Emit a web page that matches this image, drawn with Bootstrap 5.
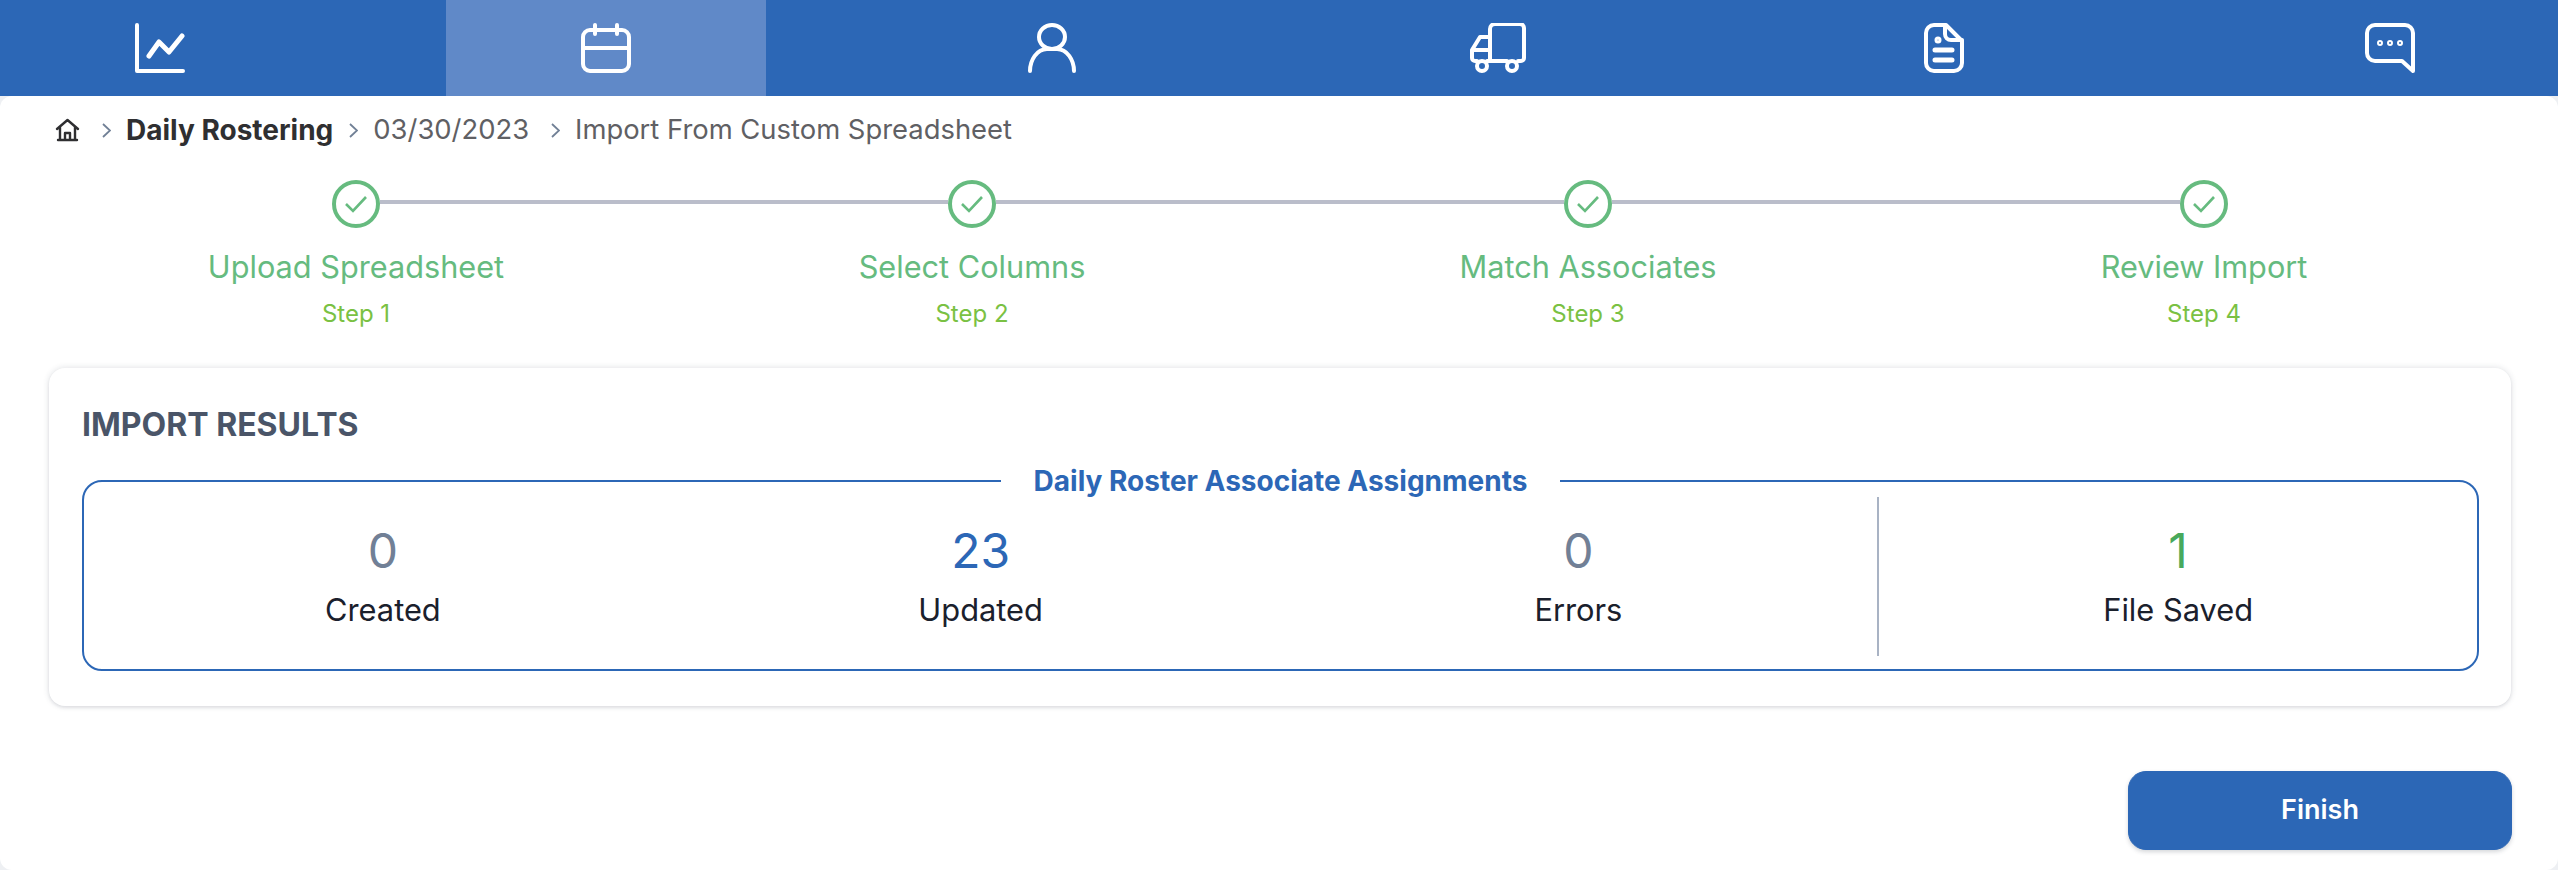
<!DOCTYPE html>
<html lang="en">

<head>
    <meta charset="UTF-8">
    <meta name="viewport" content="width=device-width, initial-scale=1.0">
    <title>Import From Custom Spreadsheet</title>
    <link href="https://cdn.jsdelivr.net/npm/bootstrap@5.3.0/dist/css/bootstrap.min.css" rel="stylesheet">
    <style>
        body {
            font-family: Inter, "Liberation Sans", sans-serif;
            background-color: #eef0f3;
            overflow: hidden;
        }

        /* top icon bar */
        .icon-bar {
            height: 96px;
            padding-right: 8px;
            background-color: #2c67b6;
        }

        .icon-tab {
            width: 320px;
            color: #fff;
        }

        .icon-tab.active {
            background-color: #6089c8;
        }

        .icon-tab svg {
            fill: none;
            stroke: currentColor;
            stroke-width: 4;
            stroke-linecap: round;
            stroke-linejoin: round;
        }

        .page-body {
            height: 774px;
            background-color: #fff;
            border-radius: 12px;
        }

        /* breadcrumb */
        .crumbs {
            height: 68px;
            padding: 0 0 0 55px;
            font-size: 27.4px;
            color: #5f6064;
        }

        .crumbs strong {
            margin-right: -6px;
            font-size: 28px;
            font-weight: 700;
            color: #2f2f31;
        }

        .crumb-gap {
            margin: 0 15px 0 22px;
            color: #718096;
        }

        /* stepper */
        .stepper {
            padding: 16px 46px 0 48px;
        }

        .step-item {
            position: relative;
            flex: 1 1 0;
            text-align: center;
        }

        .step-item:not(:last-child)::after {
            content: "";
            position: absolute;
            top: 20px;
            left: calc(50% + 24px);
            width: calc(100% - 48px);
            height: 4px;
            background-color: #babdca;
        }

        .step-dot {
            width: 48px;
            height: 48px;
            border: 4px solid #66bb7f;
            border-radius: 50%;
            color: #66bb7f;
        }

        .step-name {
            margin-top: 18px;
            font-size: 30.7px;
            line-height: 42px;
            color: #66bb7f;
        }

        .step-num {
            margin-top: 9px;
            font-size: 24px;
            line-height: 34px;
            color: #7ac143;
        }

        /* results card */
        .results-card {
            margin: 37px 47px 0 49px;
            height: 338px;
            padding: 37px 32px 0 33px;
            border: 0;
            border-radius: 16px;
            box-shadow: 0 0 6px rgba(45, 55, 72, 0.16), 0 2px 3px rgba(45, 55, 72, 0.08);
        }

        .results-title {
            margin: 0;
            font-size: 32px;
            line-height: 40px;
            font-weight: 700;
            color: #4a5568;
        }

        .results-box {
            margin-top: 19px;
            height: 207px;
            border: 2px solid #2c67b6;
            border-radius: 20px;
        }

        .results-box legend {
            float: none;
            width: auto;
            margin: 0 auto;
            padding: 0 33px;
            font-size: 28px;
            line-height: 34px;
            font-weight: 700;
            color: #2c67b6;
        }

        .stat-row {
            height: 159px;
            margin-top: -1px;
        }

        .stat-col {
            flex: 1 1 0;
            padding-top: 22px;
            text-align: center;
        }

        .stat-col.split {
            border-left: 2px solid #a9b3c4;
        }

        .stat-num {
            font-size: 48px;
            line-height: 64px;
        }

        .stat-label {
            margin-top: 7px;
            font-size: 30.8px;
            line-height: 40px;
            color: #1a202c;
        }

        .tone-grey { color: #718096; }
        .tone-blue { color: #2c67b6; }
        .tone-green { color: #48a95c; }

        /* finish button */
        .finish-row {
            margin-top: 65px;
            padding-right: 46px;
        }

        .finish-btn {
            width: 384px;
            height: 79px;
            border-radius: 18px;
            font-size: 27px;
            font-weight: 600;
            --bs-btn-bg: #2c67b6;
            --bs-btn-border-color: #2c67b6;
            --bs-btn-hover-bg: #275ca3;
            --bs-btn-hover-border-color: #275ca3;
            box-shadow: 0 2px 4px rgba(45, 55, 72, 0.2);
        }
    </style>
</head>

<body>
    <!-- Top icon bar -->
    <nav class="icon-bar d-flex justify-content-between">
        <a class="icon-tab d-flex align-items-center justify-content-center" href="#">
            <svg width="50" height="50" viewBox="0 0 50 50"><path d="M2 2V48H48"/><path d="M14 33L24 19L34 29L47 13" stroke-width="5"/></svg>
        </a>
        <a class="icon-tab active d-flex align-items-center justify-content-center" href="#">
            <svg width="50" height="50" viewBox="0 0 50 50"><rect x="2" y="7" width="46" height="41" rx="7"/><path d="M14 2V11M36 2V11M2 25H48"/></svg>
        </a>
        <a class="icon-tab d-flex align-items-center justify-content-center" href="#">
            <svg width="50" height="50" viewBox="0 0 50 50"><ellipse cx="25" cy="14" rx="13" ry="12"/><path d="M3 48C3 37 10 26 20 26H30C40 26 47 37 47 48"/></svg>
        </a>
        <a class="icon-tab d-flex align-items-center justify-content-center" href="#">
            <svg width="56" height="50" viewBox="0 0 56 50"><path d="M20 38V6A5 5 0 0 1 25 1H50A4 4 0 0 1 54 5V35A3 3 0 0 1 51 38H48M37 38H17M7 38H5A3 3 0 0 1 2 35V27L10 14H20M3 27H20"/><circle cx="12" cy="43" r="5"/><circle cx="42" cy="43" r="5"/></svg>
        </a>
        <a class="icon-tab d-flex align-items-center justify-content-center" href="#">
            <svg width="40" height="50" viewBox="0 0 40 50"><path d="M10 2H22L38 18V40A8 8 0 0 1 30 48H10A8 8 0 0 1 2 40V10A8 8 0 0 1 10 2Z"/><path d="M21 2V11A6 6 0 0 0 27 17H38"/><path d="M11 27H28M11 37H28" stroke-width="5"/><circle cx="14" cy="17" r="1.5"/></svg>
        </a>
        <a class="icon-tab d-flex align-items-center justify-content-center" href="#">
            <svg width="50" height="50" viewBox="0 0 50 50"><path d="M10 2H40A8 8 0 0 1 48 10V48L37 38H10A8 8 0 0 1 2 30V10A8 8 0 0 1 10 2Z"/><circle cx="15" cy="20" r="1"/><circle cx="25" cy="20" r="1"/><circle cx="35" cy="20" r="1"/></svg>
        </a>
    </nav>

    <div class="page-body">
        <!-- Breadcrumb -->
        <div class="crumbs d-flex align-items-center">
            <svg width="25" height="24" viewBox="0 0 25 24" fill="none" stroke="#2f2f31" stroke-width="2.4" stroke-linejoin="round" stroke-linecap="round"><path d="M2 11L12.5 2L23 11M5 9V22H20V9M10 22V15H15V22M3 22H22"/></svg>
            <svg class="crumb-gap" width="9" height="15" viewBox="0 0 9 15" fill="none" stroke="currentColor" stroke-width="1.8"><path d="M1 1L8 7.5L1 14"/></svg>
            <strong>Daily Rostering</strong>
            <svg class="crumb-gap" width="9" height="15" viewBox="0 0 9 15" fill="none" stroke="currentColor" stroke-width="1.8"><path d="M1 1L8 7.5L1 14"/></svg>
            <span>03/30/2023</span>
            <svg class="crumb-gap" width="9" height="15" viewBox="0 0 9 15" fill="none" stroke="currentColor" stroke-width="1.8"><path d="M1 1L8 7.5L1 14"/></svg>
            <span>Import From Custom Spreadsheet</span>
        </div>

        <!-- Stepper -->
        <div class="stepper d-flex">
            <div class="step-item">
                <div class="step-dot d-inline-flex align-items-center justify-content-center"><svg width="24" height="20" viewBox="0 0 24 20" fill="none" stroke="currentColor" stroke-width="2.6"><path d="M2 10L9 17L22 3"/></svg></div>
                <div class="step-name">Upload Spreadsheet</div>
                <div class="step-num">Step 1</div>
            </div>
            <div class="step-item">
                <div class="step-dot d-inline-flex align-items-center justify-content-center"><svg width="24" height="20" viewBox="0 0 24 20" fill="none" stroke="currentColor" stroke-width="2.6"><path d="M2 10L9 17L22 3"/></svg></div>
                <div class="step-name">Select Columns</div>
                <div class="step-num">Step 2</div>
            </div>
            <div class="step-item">
                <div class="step-dot d-inline-flex align-items-center justify-content-center"><svg width="24" height="20" viewBox="0 0 24 20" fill="none" stroke="currentColor" stroke-width="2.6"><path d="M2 10L9 17L22 3"/></svg></div>
                <div class="step-name">Match Associates</div>
                <div class="step-num">Step 3</div>
            </div>
            <div class="step-item">
                <div class="step-dot d-inline-flex align-items-center justify-content-center"><svg width="24" height="20" viewBox="0 0 24 20" fill="none" stroke="currentColor" stroke-width="2.6"><path d="M2 10L9 17L22 3"/></svg></div>
                <div class="step-name">Review Import</div>
                <div class="step-num">Step 4</div>
            </div>
        </div>

        <!-- Results -->
        <div class="card results-card">
            <h2 class="results-title">IMPORT RESULTS</h2>
            <fieldset class="results-box">
                <legend>Daily Roster Associate Assignments</legend>
                <div class="stat-row d-flex">
                    <div class="stat-col">
                        <div class="stat-num tone-grey">0</div>
                        <div class="stat-label">Created</div>
                    </div>
                    <div class="stat-col">
                        <div class="stat-num tone-blue">23</div>
                        <div class="stat-label">Updated</div>
                    </div>
                    <div class="stat-col">
                        <div class="stat-num tone-grey">0</div>
                        <div class="stat-label">Errors</div>
                    </div>
                    <div class="stat-col split">
                        <div class="stat-num tone-green">1</div>
                        <div class="stat-label">File Saved</div>
                    </div>
                </div>
            </fieldset>
        </div>

        <div class="finish-row d-flex justify-content-end">
            <button type="button" class="btn btn-primary finish-btn">Finish</button>
        </div>
    </div>

    <script src="https://cdn.jsdelivr.net/npm/bootstrap@5.3.0/dist/js/bootstrap.bundle.min.js"></script>
</body>

</html>
